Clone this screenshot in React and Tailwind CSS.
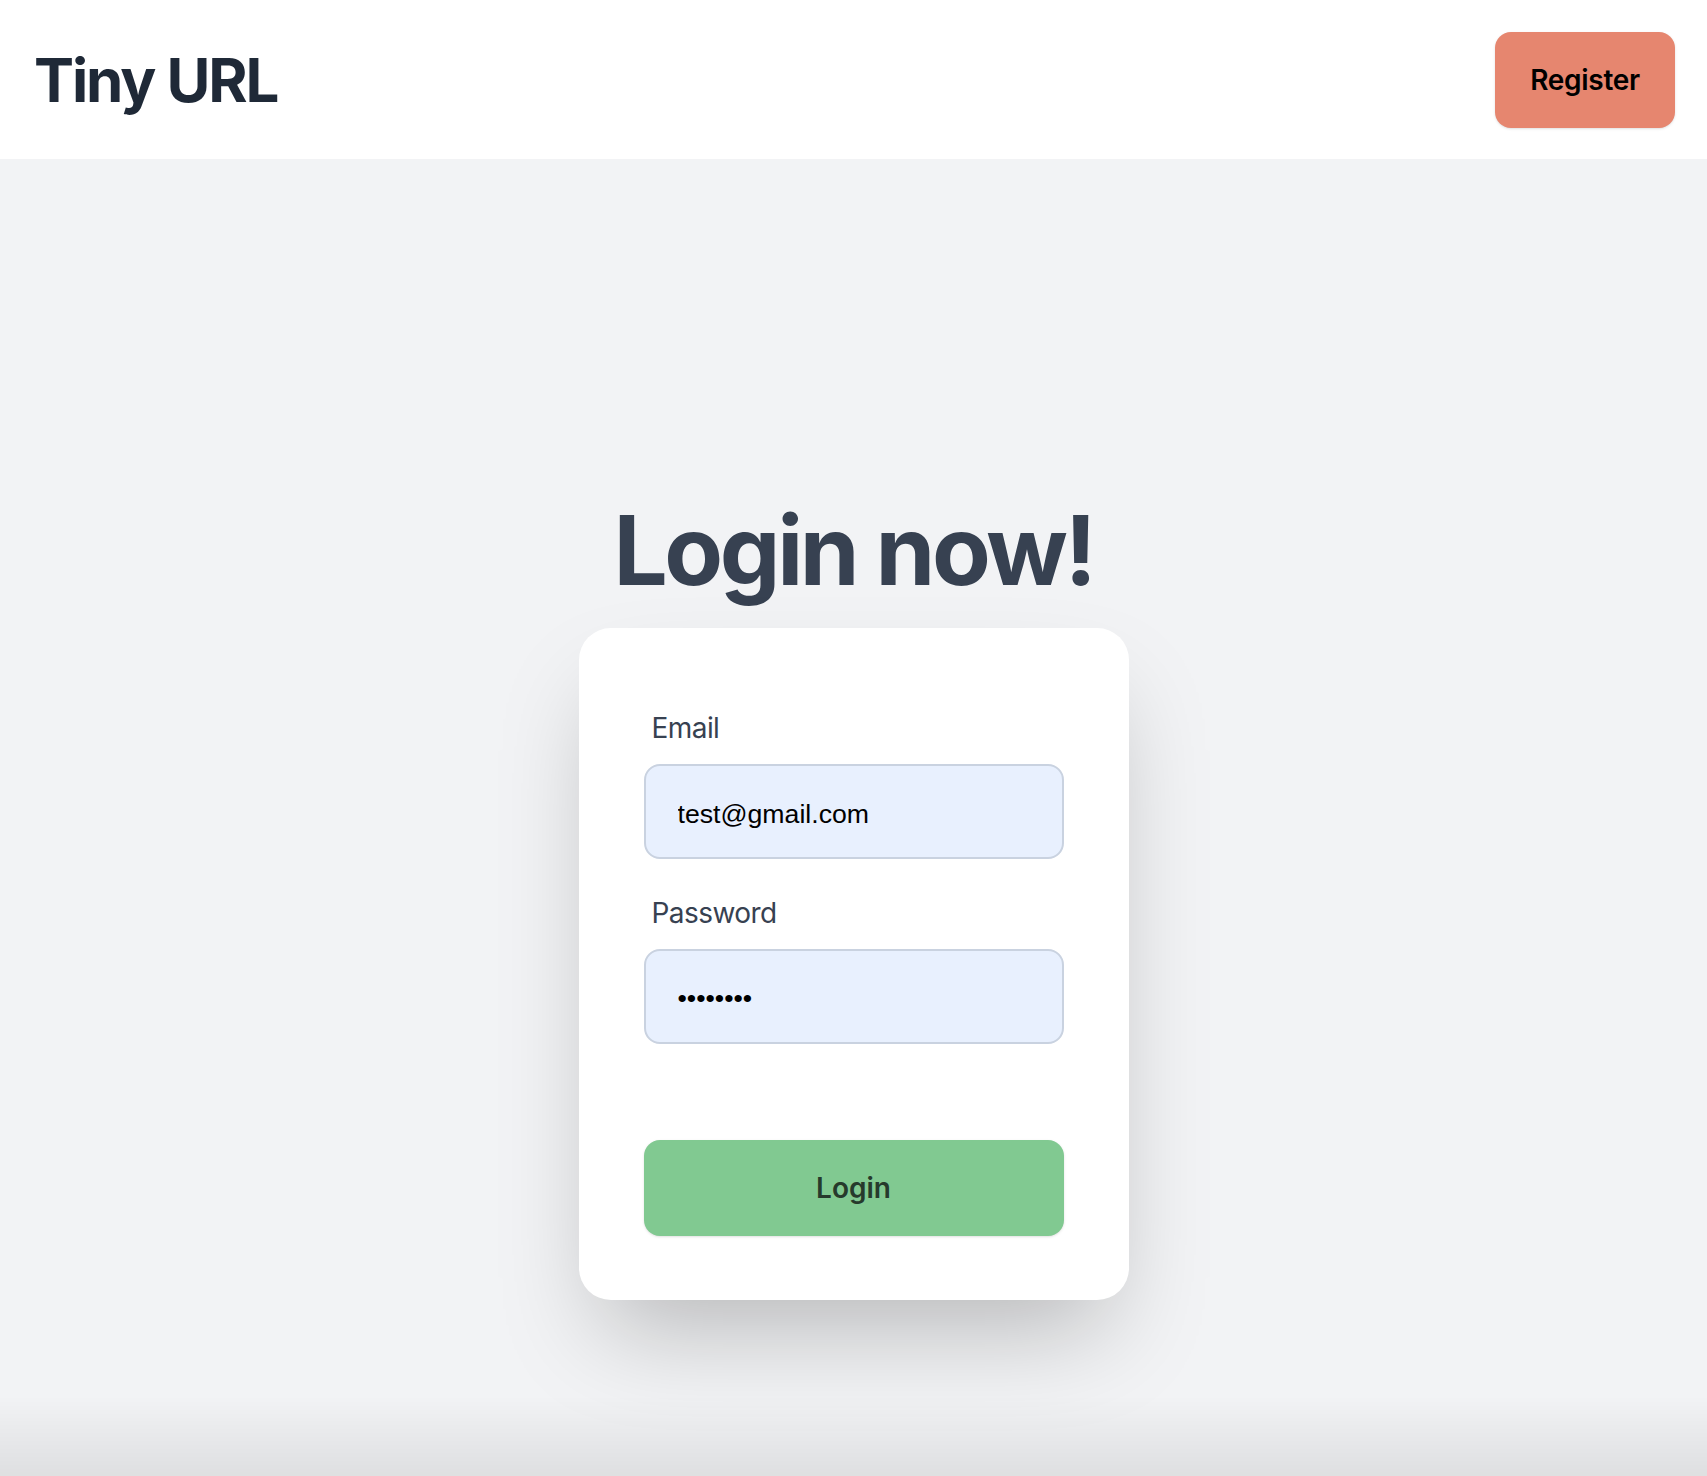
import { useState } from "react";

const App = () => {
  const [email, setEmail] = useState("test@gmail.com");
  const [password, setPassword] = useState("12345678");

  return (
    <div className="min-h-screen bg-[#f2f3f5] font-['Inter',sans-serif]">
      {/* top bar */}
      <div className="flex h-[159px] items-center justify-between bg-white pl-[34px] pr-[32px]">
        <h1 className="text-[60px] font-bold leading-none tracking-[-0.035em] text-[#1f2937]">Tiny URL</h1>
        <button className="h-[96px] w-[180px] rounded-[16px] bg-[#e6866f] text-[28px] font-semibold tracking-[-0.01em] text-black shadow-sm">
          Register
        </button>
      </div>

      {/* hero */}
      <div className="flex min-h-[1476px] flex-col items-center justify-center pt-[8px]">
        <h2 className="mb-[30px] text-[96px] font-bold leading-none tracking-[-0.035em] text-[#374151]">Login now!</h2>

        <div className="w-[550px] rounded-[32px] bg-white px-[65px] py-[64px] shadow-[0_50px_100px_-24px_rgba(0,0,0,0.25)]">
          <div className="py-[16px] pl-[8px] text-[28px] leading-[40px] tracking-[-0.02em] text-[#374151]">Email</div>
          <input
            type="email"
            value={email}
            onChange={(e) => setEmail(e.target.value)}
            className="h-[95px] w-full rounded-[16px] border-2 border-[#c9d2e0] bg-[#e8f0fe] px-[32px] pt-[5px] font-['Liberation_Sans',Arial,sans-serif] text-[26.67px] text-black outline-none"
          />

          <div className="mt-[18px] py-[16px] pl-[8px] text-[28px] leading-[40px] tracking-[-0.02em] text-[#374151]">Password</div>
          <input
            type="password"
            value={password}
            onChange={(e) => setPassword(e.target.value)}
            className="h-[95px] w-full rounded-[16px] border-2 border-[#c9d2e0] bg-[#e8f0fe] px-[32px] pt-[3px] font-['Liberation_Sans',Arial,sans-serif] text-[26.67px] text-black outline-none"
          />

          <button className="mt-[96px] h-[96px] w-full rounded-[16px] bg-[#81c991] text-[28px] font-semibold text-[#263a2c] shadow-sm">
            Login
          </button>
        </div>
      </div>

      {/* window bottom fade */}
      <div className="pointer-events-none fixed inset-x-0 bottom-0 h-[80px] bg-linear-to-b from-transparent to-black/[0.08]"></div>
    </div>
  );
};

export default App;
